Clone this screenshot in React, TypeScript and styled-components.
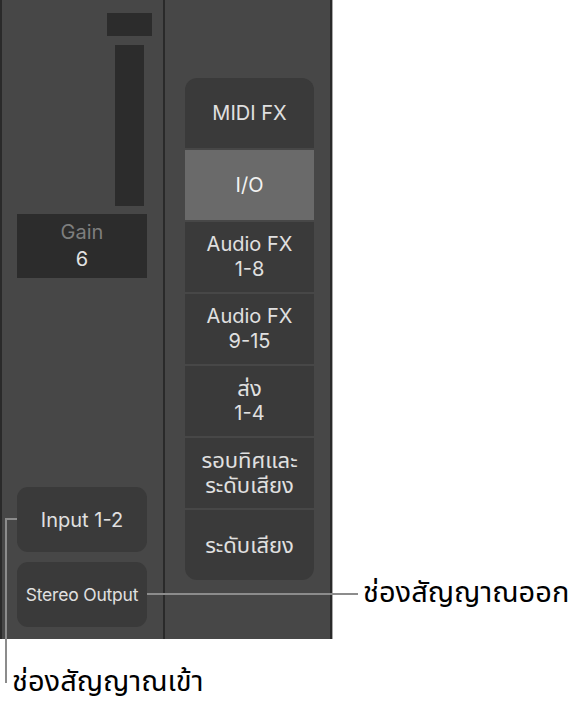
import React from "react";
import styled, { createGlobalStyle } from "styled-components";

const FONT = `"Inter", "Noto Sans", "Noto Sans Thai", "Noto Sans Thai UI", "Loma", "Garuda", "DejaVu Sans", sans-serif`;

const Global = createGlobalStyle`
  html, body { margin: 0; padding: 0; background: #ffffff; }
  body { font-family: ${FONT}; }
  * { box-sizing: border-box; }
`;

const Page = styled.div`
  position: relative;
  width: 585px;
  height: 705px;
  background: #ffffff;
  overflow: hidden;
`;

const Mixer = styled.div`
  display: flex;
  width: 332px;
  height: 639px;
  background: #474747;
  border-left: 2px solid #2a2a2a;
  border-right: 2px solid #2a2a2a;
  box-shadow: 1px 0 0 #a8a8a8;
`;

const LeftStrip = styled.div`
  display: flex;
  flex-direction: column;
  width: 163px;
  border-right: 2px solid #2a2a2a;
  padding: 13px 0 12px 15px;
`;

const RightStrip = styled.div`
  flex: 1;
  display: flex;
  flex-direction: column;
  padding: 78px 0 0 20px;
`;

const DarkBlock = styled.div<{ $offset: number; $w: number; $h: number; $mt: number }>`
  margin-left: ${(p) => p.$offset}px;
  margin-top: ${(p) => p.$mt}px;
  width: ${(p) => p.$w}px;
  height: ${(p) => p.$h}px;
  background: #2c2c2c;
`;

const GainBox = styled.div`
  margin-top: 8px;
  width: 130px;
  height: 64px;
  background: #2c2c2c;
  display: flex;
  flex-direction: column;
  align-items: center;
  justify-content: center;
  font-size: 20px;
  line-height: 27px;
`;

const GainLabel = styled.span`
  color: #7e7e7e;
`;

const GainValue = styled.span`
  color: #e2e2e2;
`;

const Spacer = styled.div`
  flex: 1;
`;

const SlotButton = styled.div<{ $small?: boolean }>`
  width: 130px;
  height: 65px;
  border-radius: 11px;
  background: #3a3a3a;
  color: #e0e0e0;
  display: flex;
  align-items: center;
  justify-content: center;
  white-space: nowrap;
  letter-spacing: ${(p) => (p.$small ? "-0.2px" : "0")};
  font-size: ${(p) => (p.$small ? "17.5px" : "20px")};
  & + & {
    margin-top: 10px;
  }
`;

const FxPanel = styled.div`
  width: 129px;
  display: flex;
  flex-direction: column;
  gap: 2px;
  border-radius: 12px;
  overflow: hidden;
`;

const FxItem = styled.div<{ $active?: boolean }>`
  height: 70px;
  background: ${(p) => (p.$active ? "#6a6a6a" : "#3a3a3a")};
  color: ${(p) => (p.$active ? "#f2f2f2" : "#e0e0e0")};
  display: flex;
  flex-direction: column;
  align-items: center;
  justify-content: center;
  text-align: center;
  font-size: 20px;
  line-height: 25px;
  white-space: nowrap;
`;

const FxLine = styled.span<{ $thai?: boolean }>`
  font-size: ${(p) => (p.$thai ? "22px" : "20px")};
`;

const Line = styled.div`
  position: absolute;
  background: #8c8c8c;
`;

const Callout = styled.div`
  position: absolute;
  color: #000000;
  font-size: 29px;
  line-height: 34px;
  white-space: nowrap;
`;

const fxItems: { lines: string[]; active?: boolean }[] = [
  { lines: ["MIDI FX"] },
  { lines: ["I/O"], active: true },
  { lines: ["Audio FX", "1-8"] },
  { lines: ["Audio FX", "9-15"] },
  { lines: ["ส่ง", "1-4"] },
  { lines: ["รอบทิศและ", "ระดับเสียง"] },
  { lines: ["ระดับเสียง"] },
];

const isThai = (s: string) => /[\u0E00-\u0E7F]/.test(s);

export default function App() {
  return (
    <Page>
      <Global />
      <Mixer>
        <LeftStrip>
          <DarkBlock $offset={90} $w={45} $h={23} $mt={0} />
          <DarkBlock $offset={98} $w={29} $h={161} $mt={9} />
          <GainBox>
            <GainLabel>Gain</GainLabel>
            <GainValue>6</GainValue>
          </GainBox>
          <Spacer />
          <SlotButton>Input 1-2</SlotButton>
          <SlotButton $small>Stereo Output</SlotButton>
        </LeftStrip>
        <RightStrip>
          <FxPanel>
            {fxItems.map((it, i) => (
              <FxItem key={i} $active={it.active}>
                {it.lines.map((l, j) => (
                  <FxLine key={j} $thai={isThai(l)}>
                    {l}
                  </FxLine>
                ))}
              </FxItem>
            ))}
          </FxPanel>
        </RightStrip>
      </Mixer>

      <Line style={{ left: 5, top: 518, width: 12, height: 2 }} />
      <Line style={{ left: 5, top: 518, width: 2, height: 165 }} />
      <Line style={{ left: 147, top: 593, width: 211, height: 2 }} />

      <Callout style={{ left: 363, top: 575 }}>ช่องสัญญาณออก</Callout>
      <Callout style={{ left: 12, top: 664 }}>ช่องสัญญาณเข้า</Callout>
    </Page>
  );
}
